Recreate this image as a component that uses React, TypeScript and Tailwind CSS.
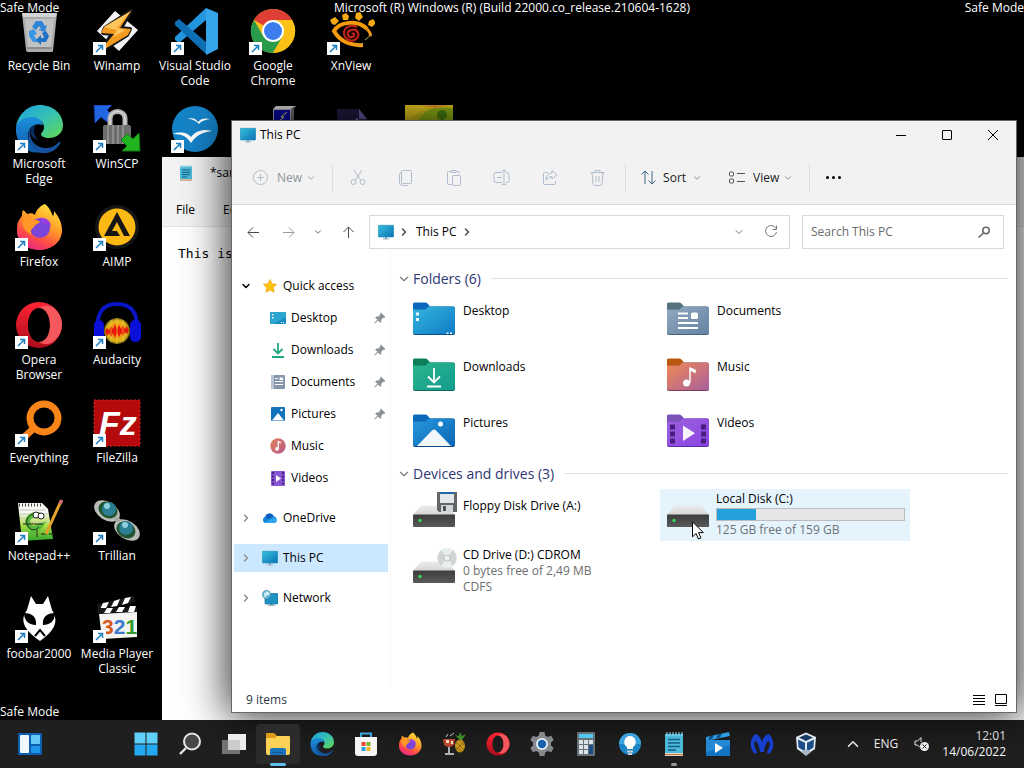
import type { ReactNode } from "react";
import { FiChevronDown, FiChevronRight, FiChevronUp } from "react-icons/fi";

/* ---------- desktop icons, all drawn on a 48x48 grid ---------- */

const RecycleBin = () => (
  <svg viewBox="0 0 48 48" className="size-full">
    <path d="M7 6h35l-4 38q0 1-1 1H13q-2 0-2-2z" fill="#a9abac" />
    <path d="M7 6h35l-1 4H8z" fill="#d2d4d5" />
    <path d="M10 12h29l-3 28H13z" fill="#c0c2c4" />
    <path d="M12 41h25" stroke="#8b8d8f" strokeWidth="2" />
    <path d="m17 20 4-6h6l3 5 2-1-2 7-7-2 3-1-2-3-3 4z" fill="#2f86d8" />
    <path d="m14 24 5-2 3 5-3 1 2 4h3v3h-6l-4-6z" fill="#3a95e6" />
    <path d="m26 31 0-3-5 5 5 5v-3h5l3-6-3-5-4 2 2 4-1 1z" fill="#1f72c6" />
  </svg>
);

const Winamp = () => (
  <svg viewBox="0 0 48 48" className="size-full">
    <path d="m22 4 23 19-19 21L4 24z" fill="#f4f4f4" />
    <path d="M38 4 12 21l-2 5 9 1L7 45l27-17 3-6-9-1z" fill="#181818" stroke="#181818" strokeWidth="4" strokeLinejoin="round" />
    <path d="M38 4 11 20l-3 6 13 1L5 46l30-18 3-6-11-1z" fill="#f59a20" />
    <path d="M38 4 11 20l13 3-4 7 13-7-9-2z" fill="#ffc45c" />
  </svg>
);

const VsCode = () => (
  <svg viewBox="0 0 48 48" className="size-full">
    <path d="M35 1v12L8 36l-4-3v-3z" fill="#2396e0" />
    <path d="M35 47V35L8 12l-4 3v3z" fill="#0f6fb5" />
    <path d="m35 1 12 5v36l-12 6z" fill="#36a4ea" />
  </svg>
);

const Chrome = () => (
  <svg viewBox="0 0 48 48" className="size-full">
    <circle cx="24" cy="24" r="22" fill="#fbc116" />
    <path d="M24 24 4.900 13A22 22 0 0 1 43.100 13H24z" fill="#dd3f34" />
    <path d="M4.900 13 14.500 29.500 24 35 24 46A22 22 0 0 1 4.900 13z" fill="#2a9a4b" />
    <path d="M14.500 29.500 33.500 29.500 24 46A22 22 0 0 1 14 43z" fill="#2a9a4b" />
    <path d="M43.100 13A22 22 0 0 1 24 46l9.500-16.500V13z" fill="#fbc116" />
    <circle cx="24" cy="24" r="11" fill="#fff" />
    <circle cx="24" cy="24" r="9" fill="#3b7ded" />
  </svg>
);

const XnView = () => (
  <svg viewBox="0 0 48 48" className="size-full">
    <g fill="#f9a913">
      <path d="m3 13 5-3 4 4-4 4-3-1zM15 8l4-2 3 3-1 4h-5zM29 6l4-1 3 5-4 4-4-3zM42 14l4-2 3 4-4 4-4-2z" />
    </g>
    <path d="M40 22C31 12 12 15 7 24c6 11 18 15 29 14" fill="none" stroke="#f59b0c" strokeWidth="4" />
    <path d="M40 22c3 3 4 5 3 7" fill="none" stroke="#f59b0c" strokeWidth="3" />
    <circle cx="25" cy="27" r="8" fill="#1b0503" />
    <path d="M25 27c2-2 4 2 0 3s-7-5-1-7 10 5 5 9-12 0-12-6 7-9 13-6" fill="none" stroke="#c3251a" strokeWidth="2" />
    <path d="m38 33 7-6M36 36l-6 4" stroke="#b8a25c" strokeWidth="1" />
  </svg>
);

const Edge = () => (
  <svg viewBox="0 0 48 48" className="size-full">
    <defs>
      <linearGradient id="edge-top" x1="0" y1="0" x2="1" y2="1">
        <stop offset="0" stopColor="#1b9fe0" />
        <stop offset=".5" stopColor="#35c1b5" />
        <stop offset="1" stopColor="#63d84c" />
      </linearGradient>
      <linearGradient id="edge-side" x1="0" y1="0" x2="0" y2="1">
        <stop offset="0" stopColor="#1c8fdc" />
        <stop offset="1" stopColor="#0f59a8" />
      </linearGradient>
    </defs>
    <path d="M1 22C3 9 13 0 25 0c13 0 23 9 23 20 0 8-6 13-14 13-5 0-8-2-8-4 0-1 3-3 3-7 0-5-5-9-12-9C9 13 3 17 1 22z" fill="url(#edge-top)" />
    <path d="M1 22c2-6 8-10 16-10 6 0 11 4 11 8-9-3-16 4-15 12s7 14 14 15C13 50 0 40 1 22z" fill="url(#edge-side)" />
    <path d="M19 19c-7 5-5 17 4 22 7 4 16 2 21-4 1-1 2 0 1 2-5 8-14 11-22 8-8-4-11-14-9-20 1-5 3-7 5-8z" fill="#15529f" />
    <path d="M21 20c-3 4-3 10 2 15-6-1-10-8-6-13z" fill="#062f66" />
  </svg>
);

const WinScp = () => (
  <svg viewBox="0 0 48 48" className="size-full">
    <path d="M1 0h18l-5 5 6 6-6 6-6-5-6 6z" fill="#2265e0" stroke="#123c9e" />
    <path d="M17 22v-8c0-10 15-10 15 0v8" fill="none" stroke="#b5b5b5" strokeWidth="5" />
    <path d="M17 22v-8c0-10 15-10 15 0v8" fill="none" stroke="#e6e6e6" strokeWidth="1" />
    <rect x="10" y="20" width="28" height="19" rx="2" fill="#6d6d6d" />
    <path d="M15 20v19M20 20v19M25 20v19M30 20v19" stroke="#8d8d8d" strokeWidth="2" />
    <path d="M47 46H29l5-5-6-6 6-6 6 5 6-6z" fill="#22b41e" stroke="#117a12" />
  </svg>
);

const OpenOffice = () => (
  <svg viewBox="0 0 48 48" className="size-full">
    <circle cx="24" cy="24" r="23" fill="#1583c8" />
    <path d="M16 14c6-2 9 0 11 3 3-4 7-4 12-3-5 1-9 2-11 5-3-3-6-5-12-5z" fill="#fff" />
    <path d="M2 29c8-3 15-1 18 3 6-7 13-8 21-6-9 1-16 4-21 12-4-6-8-9-18-9z" fill="#fff" />
  </svg>
);

const Firefox = () => (
  <svg viewBox="0 0 48 48" className="size-full">
    <defs>
      <linearGradient id="fox-body" x1=".8" y1="0" x2=".3" y2="1">
        <stop offset="0" stopColor="#ffe640" />
        <stop offset=".45" stopColor="#ff9a26" />
        <stop offset=".75" stopColor="#ff4a48" />
        <stop offset="1" stopColor="#e8258a" />
      </linearGradient>
    </defs>
    <path d="M30 1c5 4 6 8 8 12 1-1 1-3 1-5 5 6 8 12 8 19 0 12-10 20-23 20S1 38 2 26c0-7 3-11 5-13 0-2 0-4 1-6 2 1 3 3 4 4 3-1 6-1 8 1 1-5 5-9 10-11z" fill="url(#fox-body)" />
    <circle cx="25" cy="25" r="10" fill="#7a45d8" />
    <path d="M8 14c4 0 6 1 9 3 3-1 6 0 8 2-2 2-5 2-6 5-3 2-4 5-2 8-7-3-11-9-9-18z" fill="#ff9826" />
    <path d="M25 15c6-1 11 3 11 9-2-3-5-4-8-3z" fill="#9b3fe0" />
  </svg>
);

const Aimp = () => (
  <svg viewBox="0 0 48 48" className="size-full">
    <circle cx="24" cy="24" r="22" fill="#161616" />
    <circle cx="24" cy="24" r="18.500" fill="#fcb813" />
    <path d="M24 9 37 33h-6l-7-14-5 9h5l3 5H11z" fill="#161616" />
  </svg>
);

const Opera = () => (
  <svg viewBox="0 0 48 48" className="size-full">
    <defs>
      <linearGradient id="opera-ring" x1="0" y1="0" x2="0" y2="1">
        <stop offset="0" stopColor="#ff2436" />
        <stop offset="1" stopColor="#ab0d1a" />
      </linearGradient>
    </defs>
    <path fillRule="evenodd" d="M24 1a23 23 0 1 0 0 46 23 23 0 0 0 0-46zm0 6c7 0 11 8 11 17s-4 17-11 17-11-8-11-17S17 7 24 7z" fill="url(#opera-ring)" />
    <path d="M24 7c5-4 12-3 16 1 10 9 9 24-1 32-4 4-11 4-15 1 7 0 11-8 11-17S31 7 24 7z" fill="#f4585c" />
  </svg>
);

const Audacity = () => (
  <svg viewBox="0 0 48 48" className="size-full">
    <defs>
      <radialGradient id="audacity-wave">
        <stop offset=".3" stopColor="#f58a12" />
        <stop offset=".8" stopColor="#e0b61c" />
        <stop offset="1" stopColor="#6b5a10" />
      </radialGradient>
    </defs>
    <path d="M5 28C3 10 12 3 24 3s22 7 19 25" fill="none" stroke="#0a15c6" strokeWidth="4" />
    <circle cx="24" cy="30" r="13" fill="url(#audacity-wave)" />
    <path d="M12 30l2-3 2 2 2-4 2 3 2-5 2 5 2-4 2 4 2-4 2 4 2-3 2 5-2 3-2-2-2 4-2-3-2 4-2-4-2 5-2-5-2 4-2-4-2 3z" fill="#e81b0c" />
    <path d="M18 19v22M24 17v26M30 19v22" stroke="#f7e03a" strokeWidth="1" opacity=".6" />
    <rect x="1" y="19" width="10" height="22" rx="5" fill="#0a10d8" />
    <rect x="37" y="19" width="11" height="22" rx="5" fill="#0a10d8" />
  </svg>
);

const Everything = () => (
  <svg viewBox="0 0 48 48" className="size-full">
    <path d="M20 28 3 44" stroke="#f5821f" strokeWidth="7" />
    <circle cx="29" cy="19" r="14" fill="none" stroke="#f98417" strokeWidth="7" />
  </svg>
);

const FileZilla = () => (
  <svg viewBox="0 0 48 48" className="size-full">
    <rect x="1" y="1" width="46" height="46" fill="#b40a0c" stroke="#d22" strokeDasharray="2 2" />
    <text x="6" y="36" fill="#fff" fontFamily="Liberation Sans" fontSize="34" fontWeight="bold" fontStyle="italic">
      Fz
    </text>
  </svg>
);

const NotepadPlus = () => (
  <svg viewBox="0 0 48 48" className="size-full">
    <defs>
      <linearGradient id="npp-page" x1="0" y1="0" x2="0" y2="1">
        <stop offset=".25" stopColor="#f8f8f4" />
        <stop offset=".55" stopColor="#b8e34a" />
        <stop offset="1" stopColor="#2fa62a" />
      </linearGradient>
    </defs>
    <path d="M3 6h24l6 6 5 30-31 2z" fill="url(#npp-page)" />
    <path d="M4 8h22" stroke="#444" strokeWidth="3" strokeDasharray="1 2" />
    <path d="M5 13h26M5 17h28M5 21h28M6 25h28" stroke="#c2c8c2" />
    <path d="M27 19c-9-4-16 2-14 8s9 6 12 2c-7 2-9 8-7 10" fill="none" stroke="#57b93c" strokeWidth="5" />
    <path d="M27 17c-9-3-17 3-15 10s9 7 12 3" fill="none" stroke="#20301c" />
    <circle cx="21" cy="18" r="3" fill="#fff" stroke="#222" />
    <circle cx="26" cy="19" r="3" fill="#fff" stroke="#222" />
    <path d="M8 27h20M22 33v7M26 37h6M34 37h5" stroke="#222" strokeWidth="1" />
    <path d="m31 37 15-33" stroke="#e3a22a" strokeWidth="3" />
    <path d="m45 7 2-4" stroke="#d06a78" strokeWidth="3" />
  </svg>
);

const Trillian = () => (
  <svg viewBox="0 0 48 48" className="size-full">
    <ellipse cx="14" cy="14" rx="14" ry="9" transform="rotate(32 14 14)" fill="#b9bdb8" />
    <ellipse cx="34" cy="33" rx="14" ry="9" transform="rotate(32 34 33)" fill="#b9bdb8" />
    <path d="M21 21c3-2 6-1 7 3-3 2-6 1-7-3z" fill="#a4a9a1" />
    <ellipse cx="15" cy="13" rx="10" ry="8" transform="rotate(32 15 13)" fill="#24542f" />
    <ellipse cx="33" cy="33" rx="10" ry="8" transform="rotate(32 33 33)" fill="#24542f" />
    <circle cx="16" cy="12" r="7" fill="#2a7f94" />
    <circle cx="33" cy="31" r="7" fill="#2a7f94" />
    <circle cx="14" cy="9" r="3" fill="#8fd0dc" />
    <circle cx="32" cy="28" r="3" fill="#8fd0dc" />
  </svg>
);

const Foobar = () => (
  <svg viewBox="0 0 48 48" className="size-full">
    <path d="m16 1 5 8h7l5-8 4 14c8 12 1 22-12 31C12 37 3 27 12 15z" fill="#fff" />
    <path d="M9 18c8 0 13 4 12 12-8 0-12-5-12-12zM40 18c-8 0-13 4-12 12 8 0 12-5 12-12z" fill="#000" />
    <path d="m20 41 5-6 5 6" fill="none" stroke="#000" strokeWidth="2" />
  </svg>
);

const MediaPlayer = () => (
  <svg viewBox="0 0 48 48" className="size-full">
    <path d="M4 9 41 1l1 6L5 15z" fill="#191919" />
    <path d="m10 8 6-1-3 6-6 1zM21 6l6-2-3 7-6 1zM32 3l6-1-3 6-6 2z" fill="#fff" />
    <path d="M5 13h39v5H5z" fill="#191919" />
    <path d="M14 13h6l-3 5h-6zM26 12h6l-3 5h-6zM37 11h6l-2 6h-6z" fill="#fff" />
    <path d="m6 19 38-2v25L9 44z" fill="#f3f3ef" />
    <text x="9" y="39" fontFamily="Liberation Sans" fontSize="21" fontWeight="bold">
      <tspan fill="#d7581f">3</tspan>
      <tspan fill="#3d78cd">2</tspan>
      <tspan fill="#2f9a2d">1</tspan>
    </text>
  </svg>
);

const Terminal = () => (
  <svg viewBox="0 0 48 48" className="size-full">
    <path d="m24 4 3-3h20l-3 3z" fill="#e2e2e2" />
    <path d="M24 4h18v40H24z" fill="#b8b8b8" />
    <path d="m42 4 3-3v40l-3 3z" fill="#777" />
    <rect x="25" y="5" width="16" height="14" fill="#0a0ab0" />
    <path d="m29 17 6-5h-3l6-5" fill="none" stroke="#f4f09a" />
  </svg>
);

const DarkDoc = () => (
  <svg viewBox="0 0 48 48" className="size-full">
    <path d="M10 4h22l8 10v32H10z" fill="#221c45" />
    <path d="M32 4v10h8z" fill="#6a5fa8" />
    <path d="m27 17 3-4 3 4z" fill="#9a94cc" />
  </svg>
);

const Wallpaper = () => (
  <svg viewBox="0 0 48 48" className="size-full">
    <rect width="48" height="48" fill="#d9c61b" />
    <path d="M12 18C18 4 32 0 48 4v44H12z" fill="#9cbf18" />
    <path d="M0 0h48v3C28 0 12 6 0 18z" fill="#f0d020" />
    <path d="M14 0h30L30 3z" fill="#f5a02c" />
    <circle cx="37" cy="10" r="5" fill="#4f8c14" />
  </svg>
);

/* ---------- small shell icons ---------- */

const Monitor = () => (
  <svg viewBox="0 0 16 16" className="size-4 shrink-0">
    <defs>
      <linearGradient id="monitor" x1="0" y1="0" x2="1" y2="1">
        <stop offset="0" stopColor="#37c0de" />
        <stop offset="1" stopColor="#0a72b4" />
      </linearGradient>
    </defs>
    <path d="M7 13h2v2H7z" fill="#8aa2b4" />
    <path d="M5 15h6" stroke="#9fb0bd" />
    <rect x=".3" y="1.300" width="15.400" height="11.700" rx=".8" fill="url(#monitor)" stroke="#1789b4" strokeWidth=".6" />
  </svg>
);

const NetworkIcon = () => (
  <svg viewBox="0 0 16 16" className="size-4 shrink-0">
    <path d="M8 13h3v2H8z" fill="#8aa2b4" />
    <path d="M6 15.500h7" stroke="#9fb0bd" />
    <rect x="3" y="3.500" width="13" height="10.500" rx="1" fill="#1d93c4" stroke="#0e6c98" strokeWidth=".7" />
    <circle cx="4.500" cy="4.500" r="4.200" fill="#5fb4d4" stroke="#5b8fa9" strokeWidth=".6" />
    <path d="M2 3q2 0 3-2 2 2 3 2-1 3-3 2-1 2-2 3Q2 6 2 3z" fill="#d5edf6" />
  </svg>
);

const Cloud = () => (
  <svg viewBox="0 0 16 16" className="size-4 shrink-0">
    <path d="M3 13a3.500 3.500 0 0 1 .3-6.500A4.500 4.500 0 0 1 11.500 6 4 4 0 0 1 13 13z" fill="#1382d8" />
    <path d="M3.300 6.500A4.500 4.500 0 0 1 11.500 6L6 9z" fill="#0d60ba" />
    <path d="M8 9.500 12.500 7A3.200 3.200 0 0 1 13 13H3q3-3 5-3.500z" fill="#2da2ee" />
  </svg>
);

const Star = () => (
  <svg viewBox="0 0 16 16" className="size-4 shrink-0">
    <path d="m8 1.500 2 4.200 4.600.7-3.300 3.200.8 4.700L8 12l-4.100 2.300.8-4.700L1.400 6.400 6 5.700z" fill="#fcc40d" stroke="#f0a81a" strokeWidth=".8" strokeLinejoin="round" />
  </svg>
);

const MiniDesktop = () => (
  <svg viewBox="0 0 16 16" className="size-4 shrink-0">
    <rect y="2" width="16" height="12" rx="1" fill="#1688c2" />
    <path d="M1 2h14q1 0 1 1v4L4 14H1q-1 0-1-1V3z" fill="#2aa6cf" />
    <path d="M2 4h1.500v1.500H2zM2 7h1.500v1.500H2zM11 12h1v1h-1zM13 12h1v1h-1z" fill="#fff" />
  </svg>
);

const MiniDownloads = () => (
  <svg viewBox="0 0 16 16" className="size-4 shrink-0" fill="none" stroke="#1fa884" strokeWidth="1.800">
    <path d="M8 1v10M3.500 7 8 11.500 12.500 7M2 15h12" />
  </svg>
);

const MiniDocuments = () => (
  <svg viewBox="0 0 16 16" className="size-4 shrink-0">
    <rect x="1" y="1" width="14" height="14" rx="1" fill="#8595ac" />
    <rect x="1" y="1" width="3" height="14" fill="#b9c4d4" />
    <path d="M5 4.500h3M5 7.500h8M5 10.500h8" stroke="#fff" />
    <path d="M9.500 3.500H13V6H9.500z" fill="#fff" />
  </svg>
);

const MiniPictures = () => (
  <svg viewBox="0 0 16 16" className="size-4 shrink-0">
    <rect x="1" y="1" width="14" height="14" rx="1" fill="#1373bd" />
    <path d="M2 14.500 8 7l6 7.500z" fill="#fff" />
    <circle cx="11.500" cy="4" r="1.200" fill="#fff" />
  </svg>
);

const MiniMusic = () => (
  <svg viewBox="0 0 16 16" className="size-4 shrink-0">
    <defs>
      <linearGradient id="mini-music" x1="0" y1="0" x2="1" y2="1">
        <stop offset="0" stopColor="#e2805a" />
        <stop offset="1" stopColor="#b55a86" />
      </linearGradient>
    </defs>
    <circle cx="8" cy="8" r="7.700" fill="url(#mini-music)" />
    <circle cx="7" cy="10.800" r="1.900" fill="#fff" />
    <path d="M8.300 11V3.500L11 5" fill="none" stroke="#fff" strokeWidth="1.300" />
  </svg>
);

const MiniVideos = () => (
  <svg viewBox="0 0 16 16" className="size-4 shrink-0">
    <rect x="1" y="1" width="14" height="15" rx="1" fill="#8a55d4" />
    <path d="M3 2v13M13 2v13" stroke="#452583" strokeWidth="2" strokeDasharray="2 1.500" />
    <path d="m6 5 5 3.500L6 12z" fill="#fff" />
  </svg>
);

const Pin = () => (
  <svg viewBox="0 0 12 12" className="size-3 shrink-0">
    <path d="m7 1 4 4-1 .8-.8-.2L7 7.800l.1 2L6.300 10.500 4 8.200.8 11.300l-.2-.2L3.600 7.800 1.500 5.600l.8-.8 2 .1L6.500 2.700 6.200 1.800z" fill="#8b9097" stroke="#8b9097" strokeWidth=".6" />
  </svg>
);

/* ---------- 42x34 folder and drive icons ---------- */

type FolderProps = { id: string; tab: string; from: string; to: string; edge: string; children: ReactNode };

const Folder = ({ id, tab, from, to, edge, children }: FolderProps) => (
  <svg viewBox="0 0 42 34" className="h-[34px] w-[42px]">
    <defs>
      <linearGradient id={id} x1="0" y1="0" x2="1" y2="1">
        <stop offset="0" stopColor={from} />
        <stop offset="1" stopColor={to} />
      </linearGradient>
    </defs>
    <path d="M0 2Q0 .5 1.500.5h11Q14 .5 15 2l2 2.500V12H0z" fill={tab} />
    <path d="M0 7.500h11q2 0 3-1.500l1-1.500h25q2 0 2 2v24.500q0 2-2 2H2q-2 0-2-2z" fill={edge} />
    <path d="M0 7.500h11q2 0 3-1.500l1-1.500h25q2 0 2 2V30q0 2-2 2H2q-2 0-2-2z" fill={`url(#${id})`} />
    {children}
  </svg>
);

const DesktopFolder = () => (
  <Folder id="f-desktop" tab="#0c68bd" from="#35b6dc" to="#0f7bc6" edge="#0a4f88">
    <path d="M3 10.500h3v3H3zM3 16h3v3H3z" fill="#e9f8fd" />
    <path d="M33.500 30.500h2v1.500h-2zM37 30.500h2v1.500h-2z" fill="#fff" />
  </Folder>
);

const DownloadsFolder = () => (
  <Folder id="f-down" tab="#0c7e58" from="#2bb58b" to="#129c8e" edge="#0b6b58">
    <path d="M21 10v14M15 18.500l6 6 6-6M14 28.500h14" fill="none" stroke="#fff" strokeWidth="1.800" />
  </Folder>
);

const PicturesFolder = () => (
  <Folder id="f-pic" tab="#0c68bd" from="#2598dd" to="#0c66b4" edge="#0a4a86">
    <path d="M4 32 19 16.500q2-2 4 0L38 32z" fill="#f1f6fb" />
    <circle cx="27.500" cy="10" r="2.500" fill="#fff" />
  </Folder>
);

const DocumentsFolder = () => (
  <Folder id="f-doc" tab="#56727f" from="#93a9c0" to="#6483a3" edge="#4a617a">
    <path d="M11 11.500h10M11 16h10M11 21h20M11 26h20" stroke="#fff" strokeWidth="2" />
    <rect x="24" y="10.500" width="7" height="6.500" rx="1.500" fill="#fff" />
  </Folder>
);

const MusicFolder = () => (
  <Folder id="f-music" tab="#b8570f" from="#ef8a52" to="#a9609e" edge="#7d3c5c">
    <circle cx="19.500" cy="25" r="3.500" fill="#fff" />
    <path d="M22.300 25V9l6.500 2.800v3.400L23.700 13V25z" fill="#fff" />
  </Folder>
);

const VideosFolder = () => (
  <Folder id="f-video" tab="#7a54b8" from="#9c62dd" to="#8a45e2" edge="#5b2ba3">
    <path d="M5.500 10.500V30M36.500 10.500V30" stroke="#4a1d80" strokeWidth="5" strokeDasharray="5 2" />
    <path d="m16 11.500 12 7.800-12 7.700z" fill="#f6f1fc" />
  </Folder>
);

const Drive = ({ children }: { children?: ReactNode }) => (
  <svg viewBox="0 0 44 36" className="h-9 w-11">
    <defs>
      <linearGradient id="drive-top" x1="0" y1="0" x2="0" y2="1">
        <stop offset="0" stopColor="#ececec" />
        <stop offset="1" stopColor="#d4d4d4" />
      </linearGradient>
      <linearGradient id="drive-face" x1="0" y1="0" x2="0" y2="1">
        <stop offset="0" stopColor="#3c3c3c" />
        <stop offset="1" stopColor="#5a5a5a" />
      </linearGradient>
    </defs>
    <path d="M0 23 7.500 14.500q.8-1 2-1h23q1.200 0 2 1L42 23z" fill="url(#drive-top)" />
    <rect y="22.500" width="42" height="12.500" rx="1" fill="url(#drive-face)" />
    <path d="M0 22.500h42" stroke="#8c8c8c" strokeWidth=".6" />
    <circle cx="7" cy="28.500" r="1.700" fill="#34d75c" />
    {children}
  </svg>
);

const FloppyDrive = () => (
  <Drive>
    <path d="M24 0h20v20H26l-2-2z" fill="#636669" />
    <rect x="27" y="1" width="14" height="10" fill="#e4e6e8" />
    <path d="M27 1h14" stroke="#1c68a8" strokeWidth="2" />
    <rect x="28" y="13" width="12" height="7" fill="#d3d5d7" />
    <rect x="30" y="14" width="3" height="5" fill="#505356" />
  </Drive>
);

const CdDrive = () => (
  <Drive>
    <circle cx="34" cy="10" r="9.800" fill="#cfd6d5" />
    <path d="M34 10 28 2a10 10 0 0 1 12 .2zM34 10l6 7.800a10 10 0 0 1-12 .2z" fill="#e9efee" />
    <circle cx="34" cy="10" r="3" fill="#eef3f2" stroke="#b4bdbb" strokeWidth=".8" />
  </Drive>
);

/* ---------- taskbar icons, 24x24 ---------- */

const Widgets = () => (
  <svg viewBox="0 0 24 24" className="size-6">
    <rect width="24" height="22" y="1" rx="1" fill="#0d5fb0" />
    <rect x="2" y="3" width="9" height="18" rx="1" fill="#f1f8fd" />
    <rect x="13" y="3" width="9" height="9" rx="1" fill="#67c9f8" />
    <rect x="13" y="14" width="9" height="7" rx="1" fill="#1f95ea" />
  </svg>
);

const WinLogo = () => (
  <svg viewBox="0 0 24 24" className="size-6">
    <path d="M.5.500h11v11H.5zM12.500.500h11v11h-11z" fill="#5fd0fa" />
    <path d="M.5 12.500h11v11H.5zM12.500 12.500h11v11h-11z" fill="#23a9f0" />
  </svg>
);

const SearchTask = () => (
  <svg viewBox="0 0 24 24" className="size-6" fill="none">
    <path d="m8 16-6 6" stroke="#e6e6e6" strokeWidth="2.400" />
    <circle cx="14" cy="9.500" r="8" fill="#484848" stroke="#e6e6e6" strokeWidth="2" />
  </svg>
);

const TaskView = () => (
  <svg viewBox="0 0 24 24" className="size-6">
    <rect x="0" y="8" width="18" height="14" fill="#737373" />
    <rect x="6" y="2" width="18" height="16" fill="#ececec" />
    <path d="M6 8h12v10H6z" fill="#cbcbcb" />
  </svg>
);

const ExplorerTask = () => (
  <svg viewBox="0 0 24 24" className="size-6">
    <path d="M0 2q0-1 1-1h7l3 3h12v6H0z" fill="#dd9a17" />
    <path d="M0 6h9l2-2h12q1 0 1 1v16q0 2-2 2H2q-2 0-2-2z" fill="#fbd157" />
    <path d="M4 23v-5q0-2 2-2h12q2 0 2 2v5z" fill="#1a73be" />
    <path d="M7 20.500h10" stroke="#0f5796" />
  </svg>
);

const Store = () => (
  <svg viewBox="0 0 24 24" className="size-6">
    <path d="M7 6V1.500h10V6" fill="none" stroke="#3ba6de" strokeWidth="2" />
    <path d="M1 5h22v16q0 3-3 3H4q-3 0-3-3z" fill="#f5f5f5" />
    <path d="M7.500 10h4v4h-4z" fill="#e8492c" />
    <path d="M12.500 10h4v4h-4z" fill="#7db42c" />
    <path d="M7.500 15h4v4h-4z" fill="#2b9fe0" />
    <path d="M12.500 15h4v4h-4z" fill="#f3b61c" />
  </svg>
);

const Drinks = () => (
  <svg viewBox="0 0 24 24" className="size-6">
    <path d="M1 7h12l-1 6q-5 4-10 0z" fill="#b5482c" />
    <path d="m4 5 2-3M8 4l4-3" stroke="#c3cfb8" />
    <path d="M4 8h3v3H4zM9 9h2v3H9z" fill="#f1d9c3" />
    <path d="M7 15v6M3 22h9" stroke="#a9b2b1" strokeWidth="2" />
    <ellipse cx="18" cy="14" rx="5" ry="6.500" fill="#c9961e" />
    <path d="m14 10 8 8M14 15l6 5M17 8l6 6M22 10l-8 8" stroke="#7b5a12" strokeWidth=".8" />
    <path d="M18 8 13 3l4 1 1-4 2 4 4-2-4 6z" fill="#3f8d2a" />
  </svg>
);

const Gear = () => (
  <svg viewBox="0 0 24 24" className="size-6">
    <path d="M9.500 0h5l.7 3.500 2.600 1.500 3.400-1.200L23.700 8 21 10.400v3.200l2.700 2.400-2.500 4.200-3.400-1.200-2.600 1.500-.7 3.500h-5l-.7-3.500L6.200 19l-3.400 1.200L.3 16 3 13.600v-3.200L.3 8l2.500-4.200L6.200 5l2.600-1.500z" fill="#85898d" />
    <circle cx="12" cy="12" r="6" fill="#e5edf5" />
    <circle cx="12" cy="12" r="4.200" fill="#1763b0" />
  </svg>
);

const Calculator = () => (
  <svg viewBox="0 0 24 24" className="size-6">
    <rect x="3" width="18" height="24" rx="1" fill="#687078" />
    <rect x="5" y="2" width="14" height="4" fill="#50c8ee" />
    <path d="M5 8h4v4H5zM10 8h4v4h-4zM15 8h4v4h-4zM5 13h4v4H5zM10 13h4v4h-4zM5 18h4v4H5zM10 18h4v4h-4z" fill="#dbe2e8" />
    <path d="M15 13h4v9h-4z" fill="#1c4f86" />
  </svg>
);

const Bulb = () => (
  <svg viewBox="0 0 24 24" className="size-6">
    <circle cx="12" cy="12" r="11" fill="#1d86c8" />
    <path d="M1 12a11 11 0 0 1 22 0z" fill="#3ca2dc" />
    <path d="M12 4a6 6 0 0 0-3 11v2h6v-2a6 6 0 0 0-3-11z" fill="#fff" />
    <path d="M9 18.500h6v2H9zM10 21h4v2h-4z" fill="#c3cbd1" />
  </svg>
);

const NotepadIcon = () => (
  <svg viewBox="0 0 24 24" className="size-full">
    <path d="M3 2h18v19H3z" fill="#4bb9d8" />
    <path d="M3 21h18v3H3z" fill="#dfd8cf" />
    <path d="M3 22.500h18" stroke="#c6762c" />
    <path d="M5 0v4M8 0v4M11 0v4M14 0v4M17 0v4M20 0v4" stroke="#9fe0f0" />
    <path d="M6 7.500h12M6 11h12M6 14.500h12M6 18h8" stroke="#135e84" strokeWidth="1.500" />
  </svg>
);

const Movies = () => (
  <svg viewBox="0 0 24 24" className="size-6">
    <path d="M0 5 23 0l1 4L0 9z" fill="#2b9fe2" />
    <path d="m4 4 4-1-2 4-4 1zM12 2.500l4-1-2 4-4 1z" fill="#0c4c86" />
    <rect y="8" width="24" height="16" fill="#1273c2" />
    <path d="M0 8h24v5L0 20z" fill="#2488d4" />
    <path d="m9 11 8 5-8 5z" fill="#fff" />
  </svg>
);

const Malware = () => (
  <svg viewBox="0 0 24 24" className="size-6">
    <path d="M5 2c4 1 6 4 7 8 1-4 3-7 7-8 5 5 6 13 1 19-1 1-2 1-3 0 0-2 1-3 2-5 1-3 1-5 0-7-3 1-4 5-5 11h-4C9 14 8 10 5 9c-1 2-1 4 0 7 1 2 2 3 2 5-1 1-2 1-3 0C-1 15 0 7 5 2z" fill="#1740cf" />
  </svg>
);

const Cube = () => (
  <svg viewBox="0 0 24 24" className="size-6">
    <path d="m12 .5 10 4.500-1 12-9 6-9-6L2 5z" fill="#e3ebf2" />
    <path d="M12 2.500 19 5.500l-7 3.500-7-3.500z" fill="#173b66" />
    <path d="m4 7.500 7 3.300v8.700l-6.500-4zM20 7.500l-7 3.300v8.700l6.500-4z" fill="#1d4d86" />
    <path d="m7 20 5-3 5 3-5 4z" fill="#a9b7c4" />
  </svg>
);

const MutedSpeaker = () => (
  <svg viewBox="0 0 16 16" className="size-4" fill="none" stroke="#fff">
    <path d="M6 11.500 3.500 9H1V5h2.500L7 1.500V6" />
    <circle cx="10.500" cy="10.500" r="4.500" fill="#fff" stroke="none" />
    <path d="m8.500 8.500 4 4M12.500 8.500l-4 4" stroke="#1f1f1f" />
  </svg>
);

/* ---------- command bar glyphs ---------- */

const glyphs = {
  cut: <path d="m5 1 6.500 10M13 1 6.500 11M2 13a2.500 2.500 0 1 0 5 0 2.500 2.500 0 1 0-5 0M11 13a2.500 2.500 0 1 0 5 0 2.500 2.500 0 1 0-5 0" />,
  copy: <path d="M5.500 1.500h8q1 0 1 1v11q0 1-1 1h-8q-1 0-1-1v-11q0-1 1-1zM4.500 3.500q-2 0-2 2v8q0 3 3 3h6" />,
  paste: <path d="M7 15.500H3.500q-1 0-1-1v-11q0-1 1-1h2M11 2.500h2q1 0 1 1V5M6 1.500h5v2H6zM8.500 6.500h6q1 0 1 1v8q0 1-1 1h-6q-1 0-1-1v-8q0-1 1-1z" />,
  rename: <path d="M9 3.500H3q-2 0-2 2v6q0 2 2 2h6M13 3.500h1q2 0 2 2v6q0 2-2 2h-1M11 1.500v14M9 1.500h4M9 15.500h4M4 8.500h5" />,
  share: <path d="M7 3.500H3.500q-1 0-1 1v10q0 1 1 1h10q1 0 1-1V12M11 1.500l5 4.500-5 4V7.500Q7 7.500 5 11q0-7 6-7z" />,
  trash: <path d="M1.500 3.500h14M6 3.500v-2h5v2M3 3.500l1 11q0 2 2 2h5q2 0 2-2l1-11M7 7v6M10 7v6" />,
};

const Glyph = ({ children }: { children: ReactNode }) => (
  <svg viewBox="0 0 17 17" className="size-[17px]" fill="none" stroke="currentColor">
    {children}
  </svg>
);

/* ---------- data ---------- */

type Shortcut = { label?: string; name: string; icon: () => ReactNode; plain?: boolean };

const desktopColumns: (Shortcut | null)[][] = [
  [
    { label: "Recycle Bin", name: "Recycle Bin", icon: RecycleBin, plain: true },
    { label: "Microsoft Edge", name: "Microsoft Edge", icon: Edge },
    { label: "Firefox", name: "Firefox", icon: Firefox },
    { label: "Opera Browser", name: "Opera Browser", icon: Opera },
    { label: "Everything", name: "Everything", icon: Everything },
    { label: "Notepad++", name: "Notepad++", icon: NotepadPlus },
    { label: "foobar2000", name: "foobar2000", icon: Foobar },
  ],
  [
    { label: "Winamp", name: "Winamp", icon: Winamp },
    { label: "WinSCP", name: "WinSCP", icon: WinScp },
    { label: "AIMP", name: "AIMP", icon: Aimp },
    { label: "Audacity", name: "Audacity", icon: Audacity },
    { label: "FileZilla", name: "FileZilla", icon: FileZilla },
    { label: "Trillian", name: "Trillian", icon: Trillian },
    { label: "Media Player Classic", name: "Media Player Classic", icon: MediaPlayer },
  ],
  [
    { label: "Visual Studio Code", name: "Visual Studio Code", icon: VsCode },
    { name: "OpenOffice", icon: OpenOffice },
  ],
  [
    { label: "Google Chrome", name: "Google Chrome", icon: Chrome },
    { name: "Terminal", icon: Terminal },
  ],
  [
    { label: "XnView", name: "XnView", icon: XnView },
    { name: "Document", icon: DarkDoc, plain: true },
  ],
  [null, { name: "Image", icon: Wallpaper, plain: true }],
];

const quickAccess = [
  { label: "Desktop", icon: MiniDesktop, pinned: true },
  { label: "Downloads", icon: MiniDownloads, pinned: true },
  { label: "Documents", icon: MiniDocuments, pinned: true },
  { label: "Pictures", icon: MiniPictures, pinned: true },
  { label: "Music", icon: MiniMusic, pinned: false },
  { label: "Videos", icon: MiniVideos, pinned: false },
];

const roots = [
  { label: "OneDrive", icon: Cloud, active: false },
  { label: "This PC", icon: Monitor, active: true },
  { label: "Network", icon: NetworkIcon, active: false },
];

const folders = [
  { label: "Desktop", icon: DesktopFolder },
  { label: "Documents", icon: DocumentsFolder },
  { label: "Downloads", icon: DownloadsFolder },
  { label: "Music", icon: MusicFolder },
  { label: "Pictures", icon: PicturesFolder },
  { label: "Videos", icon: VideosFolder },
];

const taskbarApps = [
  { name: "Start", icon: WinLogo },
  { name: "Search", icon: SearchTask },
  { name: "Task View", icon: TaskView },
  { name: "File Explorer", icon: ExplorerTask, state: "active" },
  { name: "Microsoft Edge", icon: Edge },
  { name: "Microsoft Store", icon: Store },
  { name: "Firefox", icon: Firefox },
  { name: "Drinks", icon: Drinks },
  { name: "Opera", icon: Opera },
  { name: "Settings", icon: Gear },
  { name: "Calculator", icon: Calculator },
  { name: "Tips", icon: Bulb },
  { name: "Notepad", icon: NotepadIcon, state: "open" },
  { name: "Movies & TV", icon: Movies },
  { name: "Malwarebytes", icon: Malware },
  { name: "VirtualBox", icon: Cube },
];

const usedPercent = Math.round(((159 - 125) / 159) * 100);

/* ---------- desktop ---------- */

function DesktopIcon({ item }: { item: Shortcut }) {
  const Icon = item.icon;
  return (
    <button type="button" aria-label={item.name} className="flex h-[98px] w-full flex-col items-center pt-[7px]">
      <span className="relative size-12 shrink-0">
        <Icon />
        {!item.plain && (
          <span className="absolute bottom-0 left-0 flex size-[13px] items-center justify-center bg-white">
            <svg viewBox="0 0 9 9" className="size-[9px]" fill="none" stroke="#1c7fc4" strokeWidth="1.500">
              <path d="m1 8 6-6M3 1.500h4.500V6" />
            </svg>
          </span>
        )}
      </span>
      {item.label && <span className="mt-[3px] text-center text-xs leading-[15px] text-white">{item.label}</span>}
    </button>
  );
}

function NotepadWindow() {
  return (
    <section aria-label="Notepad" className="absolute top-[157px] right-0 bottom-0 left-[162px] flex flex-col bg-white text-black">
      <div className="flex h-8 shrink-0 items-center gap-4 bg-[#f3f3f3] px-4">
        <span className="size-4">
          <NotepadIcon />
        </span>
        <span className="text-xs">*san</span>
      </div>
      <div className="flex h-[38px] shrink-0 items-center gap-7 border-b border-[#e3e3e3] bg-[#f3f3f3] px-3.5 pt-1 text-xs">
        <button type="button">File</button>
        <button type="button">Edit</button>
      </div>
      <textarea
        aria-label="Text editor"
        defaultValue="This is"
        className="flex-1 resize-none px-4 pt-[17px] font-['DejaVu_Sans_Mono',monospace] text-[13px] outline-none"
      />
    </section>
  );
}

/* ---------- explorer ---------- */

function TitleBar() {
  return (
    <header className="flex h-7 shrink-0 items-center bg-[#f2f2f2] pl-2">
      <Monitor />
      <h1 className="ml-1 flex-1 text-xs">This PC</h1>
      <div className="flex h-full">
        <button type="button" aria-label="Minimize" className="grid w-[46px] place-items-center">
          <svg viewBox="0 0 12 12" className="size-3" stroke="#000">
            <path d="M1 6.500h10" />
          </svg>
        </button>
        <button type="button" aria-label="Maximize" className="grid w-[46px] place-items-center">
          <svg viewBox="0 0 12 12" className="size-3" fill="none" stroke="#000">
            <rect x="1.500" y="1.500" width="9" height="9" rx=".5" />
          </svg>
        </button>
        <button type="button" aria-label="Close" className="grid w-[46px] place-items-center">
          <svg viewBox="0 0 12 12" className="size-3" stroke="#000">
            <path d="m1 1 10 10M11 1 1 11" />
          </svg>
        </button>
      </div>
    </header>
  );
}

function CommandBar() {
  return (
    <div className="flex h-14 shrink-0 items-center border-b border-[#d9d9d9] bg-[#f2f2f2] pt-0.5 pl-5 text-[#1b1b1b]">
      <button type="button" disabled className="flex items-center text-xs text-[#8d9298]">
        <span className="mr-2 text-[#b4bcc6]">
          <Glyph>
            <circle cx="8.500" cy="8.500" r="7" />
            <path d="M8.500 5v7M5 8.500h7" />
          </Glyph>
        </span>
        New
        <FiChevronDown className="ml-1 size-2.5" />
      </button>
      <span className="ml-4 h-7 w-px bg-[#dedede]" />
      <div className="flex pr-1 text-[#b0bccb]">
        {Object.entries(glyphs).map(([name, path]) => (
          <button key={name} type="button" disabled aria-label={name} className="grid h-8 w-12 place-items-center">
            <Glyph>{path}</Glyph>
          </button>
        ))}
      </div>
      <span className="h-7 w-px bg-[#dedede]" />
      <button type="button" className="ml-3.5 flex items-center text-xs">
        <span className="mr-1.5 text-[#3e6680]">
          <Glyph>
            <path d="M5 15V2M1.500 5.500 5 2l3.500 3.500M12 2v13M8.500 11.500 12 15l3.500-3.500" />
          </Glyph>
        </span>
        Sort
        <FiChevronDown className="ml-1.5 size-2.5 text-[#777]" />
      </button>
      <button type="button" className="ml-[26px] flex items-center text-xs">
        <span className="mr-2 text-[#555]">
          <Glyph>
            <rect x="1.500" y="3" width="4" height="4" rx="1" />
            <rect x="1.500" y="10" width="4" height="4" rx="1" />
            <path d="M9 4.500h8M9 12.500h8" />
          </Glyph>
        </span>
        View
        <FiChevronDown className="ml-1 size-2.5 text-[#777]" />
      </button>
      <span className="ml-4 h-7 w-px bg-[#dedede]" />
      <button type="button" aria-label="See more" className="ml-4 flex gap-[3px]">
        <i className="size-[3px] rounded-full bg-black" />
        <i className="size-[3px] rounded-full bg-black" />
        <i className="size-[3px] rounded-full bg-black" />
      </button>
    </div>
  );
}

function AddressRow() {
  return (
    <div className="flex shrink-0 items-center pt-2.5 pr-3 pl-3 text-[#4b4b4b]">
      <button type="button" aria-label="Back" className="grid w-[18px] place-items-center">
        <Glyph>
          <path d="M14 8.500H3M8 3.500 3 8.500l5 5" />
        </Glyph>
      </button>
      <button type="button" aria-label="Forward" className="ml-[17px] grid w-[18px] place-items-center text-[#9a9a9a]">
        <Glyph>
          <path d="M3 8.500h11M9 3.500l5 5-5 5" />
        </Glyph>
      </button>
      <button type="button" aria-label="Recent locations" className="ml-[15px] grid w-3 place-items-center">
        <FiChevronDown className="size-2.5" />
      </button>
      <button type="button" aria-label="Up" className="ml-[15px] grid w-[18px] place-items-center">
        <Glyph>
          <path d="M8.500 14V3M3.500 8l5-5 5 5" />
        </Glyph>
      </button>
      <div className="ml-3 flex h-[34px] flex-1 items-center border border-[#d9d9d9] pr-2.5 pl-2 text-xs">
        <Monitor />
        <FiChevronRight className="ml-1 size-3" strokeWidth={3} />
        <button type="button" className="ml-1.5 text-black">
          This PC
        </button>
        <FiChevronRight className="ml-1 size-3" strokeWidth={3} />
        <button type="button" aria-label="Previous locations" className="ml-auto text-[#777]">
          <FiChevronDown className="size-3" />
        </button>
        <button type="button" aria-label="Refresh" className="ml-[18px]">
          <svg viewBox="0 0 16 16" className="size-4" fill="none" stroke="#777">
            <path d="M13 4.500A5.500 5.500 0 1 0 13.500 8M13.500 1.500v4h-4" />
          </svg>
        </button>
      </div>
      <label className="ml-3 flex h-[34px] w-[202px] items-center border border-[#d9d9d9] pr-3 pl-2">
        <input
          type="search"
          aria-label="Search This PC"
          placeholder="Search This PC"
          className="min-w-0 flex-1 text-xs outline-none placeholder:text-[#6a6a6a]"
        />
        <svg viewBox="0 0 14 14" className="size-3.5" fill="none" stroke="#666" strokeWidth="1.500">
          <circle cx="9" cy="5.500" r="3.200" />
          <path d="m6.500 8-5 4.500" />
        </svg>
      </label>
    </div>
  );
}

function Sidebar() {
  return (
    <nav className="flex w-[159px] shrink-0 flex-col gap-2 border-r border-[#f6f6f6] pt-[21px] pl-0.5">
      <div>
        <button type="button" className="flex h-8 w-full items-center pl-1.5 text-xs">
          <FiChevronDown className="size-3 text-black" strokeWidth={3} />
          <span className="mr-[5px] ml-2.5">
            <Star />
          </span>
          Quick access
        </button>
        <ul>
          {quickAccess.map((item) => {
            const Icon = item.icon;
            return (
              <li key={item.label}>
                <button type="button" className="flex h-8 w-full items-center pr-1 pl-9 text-xs">
                  <Icon />
                  <span className="ml-[5px] flex-1 text-left">{item.label}</span>
                  {item.pinned && <Pin />}
                </button>
              </li>
            );
          })}
        </ul>
      </div>
      {roots.map((item) => {
        const Icon = item.icon;
        return (
          <div key={item.label} className="flex h-8 items-center pr-0.5">
            <button
              type="button"
              className={`flex h-7 w-full items-center pl-1.5 text-xs ${item.active ? "bg-[#cce8ff]" : ""}`}
            >
              <FiChevronRight className="size-3 text-[#909090]" strokeWidth={3} />
              <span className="mr-[5px] ml-2.5">
                <Icon />
              </span>
              {item.label}
            </button>
          </div>
        );
      })}
    </nav>
  );
}

function GroupHeader({ children }: { children: ReactNode }) {
  return (
    <h2 className="flex h-[31px] items-center text-sm text-[#2d3672]">
      <FiChevronDown className="mr-0.5 ml-1.5 size-3.5 text-[#7a7a7a]" />
      {children}
      <span className="ml-2.5 h-px flex-1 bg-[#e2e2e2]" />
    </h2>
  );
}

function Content() {
  return (
    <div className="min-w-0 flex-1 pt-3.5 pr-2">
      <GroupHeader>Folders (6)</GroupHeader>
      <ul className="grid grid-cols-[repeat(auto-fill,250px)] gap-1 pl-[15px]">
        {folders.map((folder) => {
          const Icon = folder.icon;
          return (
            <li key={folder.label}>
              <button type="button" className="flex h-[52px] w-full gap-2 pt-2 pl-[7px] text-left text-xs">
                <Icon />
                <span className="pt-px">{folder.label}</span>
              </button>
            </li>
          );
        })}
      </ul>
      <GroupHeader>Devices and drives (3)</GroupHeader>
      <ul className="grid grid-cols-[repeat(auto-fill,250px)] gap-1 pl-[15px]">
        <li>
          <button type="button" className="flex h-[52px] w-full gap-1.5 pt-[3px] pl-[7px] text-left text-xs">
            <FloppyDrive />
            <span className="pt-1.5">Floppy Disk Drive (A:)</span>
          </button>
        </li>
        <li>
          <button type="button" className="relative flex h-[52px] w-full gap-[5px] bg-[#e5f3fc] pt-0.5 pr-[5px] pl-[7px] text-left text-xs">
            <span className="pt-px">
              <Drive />
            </span>
            <span className="flex flex-1 flex-col gap-px">
              <span>Local Disk (C:)</span>
              <span className="h-[13px] border border-[#bcbcbc] bg-[#e6e6e6]">
                <span className="block h-full bg-[#26a0da]" style={{ width: `${usedPercent}%` }} />
              </span>
              <span className="text-[#6d7379]">125 GB free of 159 GB</span>
            </span>
            {/* mouse pointer */}
            <svg viewBox="0 0 12 19" className="absolute top-8 left-8 h-[19px] w-3">
              <path d="M.5.800v15l3.600-3.300 2.400 5.500 2.400-1-2.300-5.400h4.700z" fill="#fff" stroke="#000" />
            </svg>
          </button>
        </li>
        <li>
          <button type="button" className="flex w-full gap-1.5 pt-0.5 pl-[7px] text-left text-xs">
            <span className="pt-px">
              <CdDrive />
            </span>
            <span className="text-[#6d6d6d]">
              <span className="block text-black">CD Drive (D:) CDROM</span>
              <span className="block">0 bytes free of 2,49 MB</span>
              <span className="block">CDFS</span>
            </span>
          </button>
        </li>
      </ul>
    </div>
  );
}

function ExplorerWindow() {
  return (
    <section
      aria-label="This PC"
      className="absolute top-[120px] right-[7px] bottom-[7px] left-[231px] flex flex-col border border-[#66666a] bg-white text-black shadow-[0_0_40px_4px_rgba(0,0,0,0.8)]"
    >
      <TitleBar />
      <CommandBar />
      <AddressRow />
      <div className="flex min-h-0 flex-1">
        <Sidebar />
        <Content />
      </div>
      <footer className="flex h-6 shrink-0 items-center gap-2 pr-2 pl-3.5 text-xs text-[#2b3a4a]">
        <span className="flex-1">9 items</span>
        <button type="button" aria-label="Details view">
          <svg viewBox="0 0 14 14" className="size-3.5" stroke="#000">
            <path d="M1 2.500h12M1 5.500h12M1 8.500h12M1 11.500h12" />
          </svg>
        </button>
        <button type="button" aria-label="Large icons view">
          <svg viewBox="0 0 14 14" className="size-3.5" fill="none" stroke="#000">
            <path d="M1.500 1.500h11v9h-11zM1 12.500h12" />
          </svg>
        </button>
      </footer>
    </section>
  );
}

/* ---------- taskbar ---------- */

function Taskbar() {
  return (
    <footer className="flex h-12 shrink-0 items-center bg-[#1f1f1f] text-white">
      <button type="button" aria-label="Widgets" className="ml-[18px]">
        <Widgets />
      </button>
      <div className="flex flex-1 justify-end">
        {taskbarApps.map((app) => {
          const Icon = app.icon;
          return (
            <button
              key={app.name}
              type="button"
              aria-label={app.name}
              className={`relative grid h-10 w-11 place-items-center rounded ${app.state === "active" ? "bg-[#2b2b2b]" : ""}`}
            >
              <span className="size-6">
                <Icon />
              </span>
              {app.state === "active" && <i className="absolute -bottom-0.5 h-[3px] w-4 rounded-full bg-[#5fbff0]" />}
              {app.state === "open" && <i className="absolute -bottom-0.5 h-[3px] w-1.5 rounded-full bg-[#9a9a9a]" />}
            </button>
          );
        })}
      </div>
      <div className="ml-4 flex items-center pr-[18px] text-xs leading-4">
        <button type="button" aria-label="Show hidden icons">
          <FiChevronUp className="size-[18px]" />
        </button>
        <button type="button" className="ml-3">
          ENG
        </button>
        <button type="button" aria-label="Volume muted" className="ml-4">
          <MutedSpeaker />
        </button>
        <button type="button" className="ml-3 text-right">
          <span className="block">12:01</span>
          <span className="block">14/06/2022</span>
        </button>
      </div>
    </footer>
  );
}

export default function App() {
  return (
    <div className="flex min-h-screen flex-col overflow-hidden bg-black font-['Open_Sans','Noto_Sans',sans-serif]">
      <main className="relative flex flex-1">
        <div className="flex">
          {desktopColumns.map((column, i) => (
            <div key={i} className="flex w-[78px] flex-col">
              {column.map((item, j) => (item ? <DesktopIcon key={item.name} item={item} /> : <div key={j} className="h-[98px]" />))}
            </div>
          ))}
        </div>
        <div className="absolute inset-x-0 top-0 flex justify-between text-xs text-white">
          <span>Safe Mode</span>
          <span>Microsoft (R) Windows (R) (Build 22000.co_release.210604-1628)</span>
          <span>Safe Mode</span>
        </div>
        <span className="absolute bottom-0 left-0 text-xs text-white">Safe Mode</span>
        <NotepadWindow />
        <ExplorerWindow />
      </main>
      <Taskbar />
    </div>
  );
}
